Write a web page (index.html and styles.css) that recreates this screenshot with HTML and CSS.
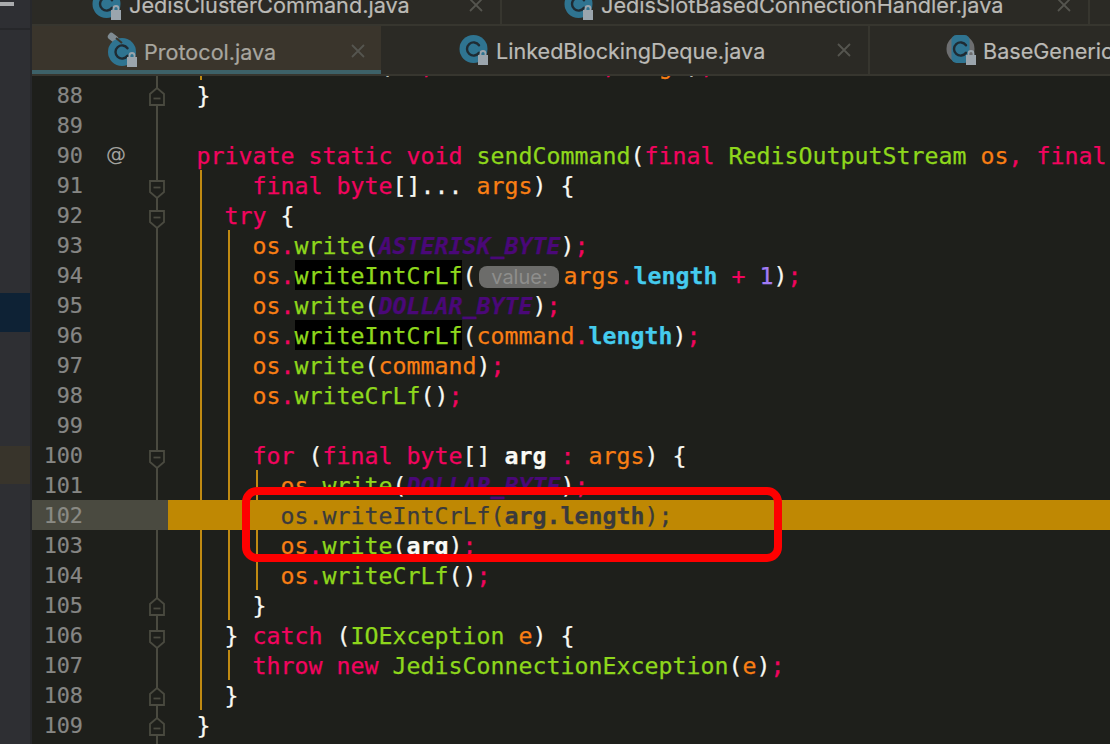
FILE: index.html
```html
<!DOCTYPE html>
<html lang="en">
<head>
<meta charset="utf-8">
<title>Protocol.java</title>
<link rel="stylesheet" href="styles.css">
</head>
<body>
<svg class="defs" width="0" height="0" aria-hidden="true">
  <symbol id="fold-down" viewBox="0 0 16 19"><path class="fold-s" d="M1 1H15V12L8 18 1 12Z"/><path class="fold-m" d="M4.5 7.5H11.5"/></symbol>
  <symbol id="fold-up" viewBox="0 0 16 19"><path class="fold-s" d="M1 18H15V7L8 1 1 7Z"/><path class="fold-m" d="M4.5 11.5H11.5"/></symbol>
  <symbol id="cls" viewBox="0 0 32 30"><circle class="c-fill" cx="14.5" cy="14" r="14"/><path class="c-mark" d="M20 10.2A6.6 6.6 0 1 0 20 17.8"/><rect class="lock-f" x="19" y="20" width="10" height="10"/><path class="lock-o" d="M21.5 20.5V18.5a2.5 2.5 0 0 1 5 0V20.5"/></symbol>
  <symbol id="cls-pin" viewBox="0 0 36 36"><rect class="pin" x="1" y="3" width="11" height="7" rx="3" transform="rotate(38 6 6)"/><circle class="c-fill" cx="15" cy="21" r="14"/><path class="c-cut" d="M9 7l6 5"/><path class="c-mark" d="M20.5 17.2A6.6 6.6 0 1 0 20.5 24.8"/><rect class="lock-f" x="20" y="26" width="10" height="10"/><path class="lock-o" d="M22.5 26.5V24.5a2.5 2.5 0 0 1 5 0V26.5"/></symbol>
  <symbol id="cls-abs" viewBox="0 0 32 30"><circle class="c-side" cx="14.5" cy="14" r="14"/><rect class="c-fill" x="5.5" y="0" width="18" height="28" rx="5"/><path class="c-mark" d="M20 10.2A6.6 6.6 0 1 0 20 17.8"/><rect class="lock-f" x="20" y="20" width="10" height="10"/><path class="lock-o" d="M22.5 20.5V18.5a2.5 2.5 0 0 1 5 0V20.5"/></symbol>
  <symbol id="x" viewBox="0 0 14 14"><path class="x-s" d="M1 1L13 13M13 1L1 13"/></symbol>
</svg>

<div class="app">
  <aside class="side">
    <div class="side-top"><span class="dash"></span></div>
    <div class="side-sel-blue"></div>
    <div class="side-sel-brown"></div>
  </aside>

  <main class="main">
    <div class="tabs tabs-back">
      <div class="tab t-a"><svg class="ic"><use href="#cls"/></svg><span class="name">JedisClusterCommand.java</span><svg class="close"><use href="#x"/></svg></div>
      <div class="tab t-b"><svg class="ic"><use href="#cls"/></svg><span class="name">JedisSlotBasedConnectionHandler.java</span><svg class="close"><use href="#x"/></svg></div>
    </div>
    <div class="tabs tabs-front">
      <div class="tab t-c active"><svg class="ic ic-pin"><use href="#cls-pin"/></svg><span class="name">Protocol.java</span><svg class="close"><use href="#x"/></svg></div>
      <div class="tab t-d"><svg class="ic"><use href="#cls"/></svg><span class="name">LinkedBlockingDeque.java</span><svg class="close"><use href="#x"/></svg></div>
      <div class="tab t-e"><svg class="ic"><use href="#cls-abs"/></svg><span class="name">BaseGeneric</span></div>
    </div>

    <div class="editor">
      <div class="lines">
        <div class="row"><span class="no">87</span><span class="at"></span><span class="fold"></span><code class="code g1">  <b class="m">sendCommand</b><b class="w">(</b><b class="v">os</b><b class="k">,</b> <b class="v">command</b><b class="k">.</b><b class="f">raw</b><b class="k">,</b> <b class="v">args</b><b class="w">)</b><b class="k">;</b></code></div>
        <div class="row"><span class="no">88</span><span class="at"></span><span class="fold"><svg class="fi fi-up"><use href="#fold-up"/></svg></span><code class="code"><b class="w">}</b></code></div>
        <div class="row"><span class="no">89</span><span class="at"></span><span class="fold"></span><code class="code"></code></div>
        <div class="row"><span class="no">90</span><span class="at">@</span><span class="fold"></span><code class="code"><b class="k">private static void</b> <b class="m">sendCommand</b><b class="w">(</b><b class="k">final</b> <b class="m">RedisOutputStream</b> <b class="v">os</b><b class="k">,</b> <b class="k">final</b></code></div>
        <div class="row"><span class="no">91</span><span class="at"></span><span class="fold"><svg class="fi fi-down"><use href="#fold-down"/></svg></span><code class="code g1">    <b class="k">final byte</b><b class="w">[]...</b> <b class="v">args</b><b class="w">) {</b></code></div>
        <div class="row"><span class="no">92</span><span class="at"></span><span class="fold"><svg class="fi fi-down"><use href="#fold-down"/></svg></span><code class="code g1">  <b class="k">try</b> <b class="w">{</b></code></div>
        <div class="row"><span class="no">93</span><span class="at"></span><span class="fold"></span><code class="code g1 g2">    <b class="v">os</b><b class="k">.</b><b class="m">write</b><b class="w">(</b><b class="c">ASTERISK_BYTE</b><b class="w">)</b><b class="k">;</b></code></div>
        <div class="row"><span class="no">94</span><span class="at"></span><span class="fold"></span><code class="code g1 g2">    <b class="v">os</b><b class="k">.</b><b class="m hl">writeIntCrLf</b><b class="w">(</b><span class="hint">value:</span><b class="v">args</b><b class="k">.</b><b class="f">length</b> <b class="k">+</b> <b class="n">1</b><b class="w">)</b><b class="k">;</b></code></div>
        <div class="row"><span class="no">95</span><span class="at"></span><span class="fold"></span><code class="code g1 g2">    <b class="v">os</b><b class="k">.</b><b class="m">write</b><b class="w">(</b><b class="c">DOLLAR_BYTE</b><b class="w">)</b><b class="k">;</b></code></div>
        <div class="row"><span class="no">96</span><span class="at"></span><span class="fold"></span><code class="code g1 g2">    <b class="v">os</b><b class="k">.</b><b class="m hl">writeIntCrLf</b><b class="w">(</b><b class="v">command</b><b class="k">.</b><b class="f">length</b><b class="w">)</b><b class="k">;</b></code></div>
        <div class="row"><span class="no">97</span><span class="at"></span><span class="fold"></span><code class="code g1 g2">    <b class="v">os</b><b class="k">.</b><b class="m">write</b><b class="w">(</b><b class="v">command</b><b class="w">)</b><b class="k">;</b></code></div>
        <div class="row"><span class="no">98</span><span class="at"></span><span class="fold"></span><code class="code g1 g2">    <b class="v">os</b><b class="k">.</b><b class="m">writeCrLf</b><b class="w">()</b><b class="k">;</b></code></div>
        <div class="row"><span class="no">99</span><span class="at"></span><span class="fold"></span><code class="code g1 g2"></code></div>
        <div class="row"><span class="no">100</span><span class="at"></span><span class="fold"><svg class="fi fi-down"><use href="#fold-down"/></svg></span><code class="code g1 g2">    <b class="k">for</b> <b class="w">(</b><b class="k">final byte</b><b class="w">[]</b> <b class="a">arg</b> <b class="k">:</b> <b class="v">args</b><b class="w">) {</b></code></div>
        <div class="row"><span class="no">101</span><span class="at"></span><span class="fold"></span><code class="code g1 g2 g3">      <b class="v">os</b><b class="k">.</b><b class="m">write</b><b class="w">(</b><b class="c">DOLLAR_BYTE</b><b class="w">)</b><b class="k">;</b></code></div>
        <div class="row current"><span class="no">102</span><span class="at"></span><span class="fold"></span><code class="code">      os.writeIntCrLf(<b class="bd">arg.length</b>);</code></div>
        <div class="row"><span class="no">103</span><span class="at"></span><span class="fold"></span><code class="code g1 g2 g3">      <b class="v">os</b><b class="k">.</b><b class="m">write</b><b class="w">(</b><b class="a">arg</b><b class="w">)</b><b class="k">;</b></code></div>
        <div class="row"><span class="no">104</span><span class="at"></span><span class="fold"></span><code class="code g1 g2 g3">      <b class="v">os</b><b class="k">.</b><b class="m">writeCrLf</b><b class="w">()</b><b class="k">;</b></code></div>
        <div class="row"><span class="no">105</span><span class="at"></span><span class="fold"><svg class="fi fi-up"><use href="#fold-up"/></svg></span><code class="code g1 g2">    <b class="w">}</b></code></div>
        <div class="row"><span class="no">106</span><span class="at"></span><span class="fold"><svg class="fi fi-down"><use href="#fold-down"/></svg></span><code class="code g1">  <b class="w">}</b> <b class="k">catch</b> <b class="w">(</b><b class="m">IOException</b> <b class="v">e</b><b class="w">) {</b></code></div>
        <div class="row"><span class="no">107</span><span class="at"></span><span class="fold"></span><code class="code g1 g2">    <b class="k">throw new</b> <b class="m">JedisConnectionException</b><b class="w">(</b><b class="v">e</b><b class="w">)</b><b class="k">;</b></code></div>
        <div class="row"><span class="no">108</span><span class="at"></span><span class="fold"><svg class="fi fi-up"><use href="#fold-up"/></svg></span><code class="code g1">  <b class="w">}</b></code></div>
        <div class="row"><span class="no">109</span><span class="at"></span><span class="fold"><svg class="fi fi-up"><use href="#fold-up"/></svg></span><code class="code"><b class="w">}</b></code></div>
        <div class="row"><span class="no"></span><span class="at"></span><span class="fold"></span><code class="code"></code></div>
      </div>
      <div class="callout"></div>
    </div>
  </main>
</div>
</body>
</html>
```
FILE: styles.css
```css
* { box-sizing: border-box; }
html, body { margin: 0; height: 100%; overflow: hidden; background: #1e1f1b; }
.defs { position: absolute; }

.app { display: flex; width: 1110px; height: 744px; overflow: hidden; }

/* left project panel strip */
.side {
  width: 32px; flex: none; display: flex; flex-direction: column;
  background: #2e2f33; border-right: 2px solid #27282b;
}
.side-top { height: 30px; flex: none; border-bottom: 2px solid #26272a; padding-top: 2px; }
.dash { display: block; width: 14px; height: 4px; background: #a9abad; }
.side-sel-blue { height: 39px; flex: none; margin-top: 263px; background: #0e2235; }
.side-sel-brown { height: 38px; flex: none; margin-top: 114px; background: #38342b; }

.main { flex: 1; min-width: 0; display: flex; flex-direction: column; position: relative; }

/* tabs */
.tabs {
  display: flex; flex: none; overflow: hidden; position: relative; z-index: 2;
  background: #2b2a25;
  font-family: Inter, "Liberation Sans", sans-serif;
  color: #bbbab6;
  -webkit-text-stroke: 0.2px;
}
.tabs-back { height: 26px; border-bottom: 2px solid #37362f; font-size: 21.7px; }
.tabs-back .tab { margin-top: -18px; height: 45px; }
.tabs-front { height: 50px; border-bottom: 2px solid #37362f; font-size: 21.6px; }
.tabs-front .name { padding-top: 2px; }
.tab {
  display: flex; align-items: center; flex: none; position: relative;
  border-right: 2px solid #37362f;
}
.name { white-space: nowrap; }
.ic { width: 32px; height: 30px; flex: none; margin-right: 5px; }
.ic-pin { width: 36px; height: 36px; margin-top: -5px; margin-right: 1px; }
.close { width: 14px; height: 14px; flex: none; margin-left: auto; }
.x-s { stroke: #55554f; stroke-width: 1.8; fill: none; }

.t-a { width: 470px; padding-left: 60px; padding-right: 17px; }
.t-b { width: 588px; padding-left: 62px; padding-right: 17px; }
.t-c { width: 349px; padding-left: 75px; padding-right: 16px; height: 50px; }
.t-d { width: 489px; padding-left: 78px; padding-right: 17px; }
.t-e { width: 240px; padding-left: 76px; border-right: 0; }
.active {
  background: #3a352c; color: #a8a69f;
  box-shadow: inset 0 -6px 0 #3d6168;
  border-right: 0;
}
.active .x-s { stroke: #5f5d56; }

.c-fill { fill: #2f7491; }
.c-side { fill: #6d6e70; }
.c-mark { fill: none; stroke: #1f2b33; stroke-width: 2.4; stroke-linecap: round; }
.c-cut { stroke: #3a352c; stroke-width: 2; }
.lock-f { fill: #9ba5ad; }
.lock-o { fill: none; stroke: #9ba5ad; stroke-width: 1.8; }
.pin { fill: #7f8b92; }

/* editor */
.editor { flex: 1; min-height: 0; position: relative; overflow: hidden; background: #1e1f1b; }
.lines { margin-top: -26px; }
.row {
  display: flex; height: 30px; align-items: stretch;
  font-family: "DejaVu Sans Mono", monospace;
  white-space: pre;
}
.no {
  width: 51px; flex: none; text-align: right;
  font-size: 21.8px; line-height: 32px; color: #868684;
  -webkit-text-stroke: 0.2px;
}
.at {
  width: 66px; flex: none; padding-left: 23px;
  font-family: "DejaVu Sans", sans-serif;
  font-size: 20px; line-height: 28px; color: #a2a29e;
}
.fold {
  width: 19px; flex: none; position: relative;
  background: linear-gradient(#4a4a40, #4a4a40) 7px 0 / 2px 100% no-repeat;
}
.fi { position: absolute; left: 0; width: 16px; height: 19px; }
.fi-down { top: 10px; }
.fi-up { top: 7px; }
.fold-s { fill: #1e1f1b; stroke: #4a4a40; stroke-width: 1.8; }
.fold-m { stroke: #4a4a40; stroke-width: 1.8; fill: none; }

.code {
  flex: 1; min-width: 0; overflow: hidden; display: block;
  font-family: "DejaVu Sans Mono", monospace;
  font-size: 23.25px; line-height: 32px; padding-left: 28.5px;
  background-repeat: no-repeat;
  -webkit-text-stroke: 0.25px;
}
.code b { font-weight: 400; }
/* indent guides */
.g1 { background-image: linear-gradient(#c08a12, #c08a12); background-size: 2px 100%; background-position: 32px 0; }
.g1.g2 { background-image: linear-gradient(#c08a12, #c08a12), linear-gradient(#c08a12, #c08a12); background-size: 2px 100%, 2px 100%; background-position: 32px 0, 60px 0; }
.g1.g2.g3 { background-image: linear-gradient(#c08a12, #c08a12), linear-gradient(#c08a12, #c08a12), linear-gradient(#c08a12, #c08a12); background-size: 2px 100%, 2px 100%, 2px 100%; background-position: 32px 0, 60px 0, 88px 0; }

/* syntax */
.k { color: #f2045f; }
.w { color: #f8f8f2; }
.m { color: #8ed71c; }
.v { color: #f97e14; }
.f { color: #45cbee; font-weight: 700 !important; }
.n { color: #a27cf5; }
.c { color: #4a0878; font-weight: 700 !important; font-style: italic; }
.a { color: #fafaf5; font-weight: 700 !important; }
.hl { background: #000; display: inline-block; }
.hint {
  display: inline-block; width: 80px; height: 22px; margin: 0 4px 0 3px;
  background: #6c6c6a; border-radius: 8px;
  font-family: Inter, "Liberation Sans", sans-serif; font-size: 20px;
  line-height: 22px; text-align: center; color: #8e8e8c;
  -webkit-text-stroke: 0;
}

/* caret row */
.current .no { background: #4a4a40; color: #8a8a84; }
.current .at { background: #4a4a40; }
.current .fold { background: #4a4a40; }
.current .code { background: #bf8803; color: #3a3a3c; }
.bd { font-weight: 700 !important; }

/* annotation drawn on top of the screenshot */
.callout {
  position: absolute; left: 210px; top: 411px; width: 540px; height: 75px;
  border: 8px solid #fe0000; border-radius: 15px; pointer-events: none;
}
```
